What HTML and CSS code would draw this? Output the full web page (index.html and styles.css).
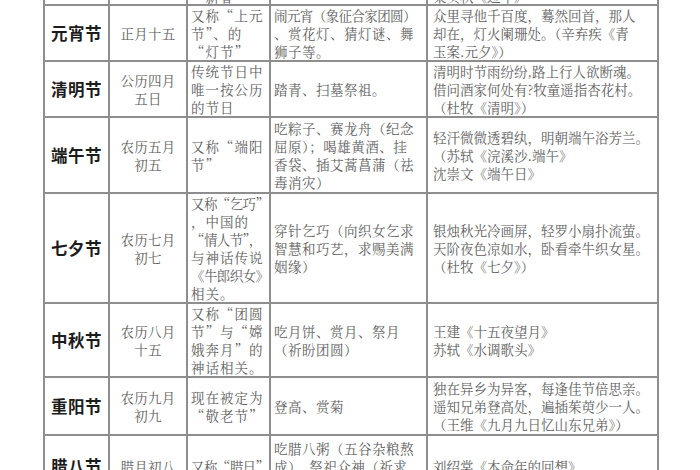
FILE: index.html
```html
<!DOCTYPE html>
<html lang="zh">
<head>
<meta charset="utf-8">
<title>中国传统节日</title>
<link rel="stylesheet" href="styles.css">
</head>
<body>
<div class="page">
<table class="fest">
  <colgroup>
    <col class="c1"><col class="c2"><col class="c3"><col class="c4"><col class="c5">
  </colgroup>
  <tbody>
    <tr class="r0">
      <td class="name"></td>
      <td class="date"></td>
      <td class="alias">“新春”</td>
      <td class="custom"></td>
      <td class="poem">梁实秋《过年》</td>
    </tr>
    <tr class="r1">
      <td class="name">元宵节</td>
      <td class="date">正月十五</td>
      <td class="alias">又称“上元<br>节”、的<br>“灯节”</td>
      <td class="custom"><span class="tight">闹元宵（象征合家团圆）</span><br>、赏花灯、猜灯谜、舞<br>狮子等。</td>
      <td class="poem">众里寻他千百度，蓦然回首，那人<br>却在，灯火阑珊处。（辛弃疾《青<br>玉案.元夕》）</td>
    </tr>
    <tr class="r2">
      <td class="name">清明节</td>
      <td class="date">公历四月<br>五日</td>
      <td class="alias">传统节日中<br>唯一按公历<br>的节日</td>
      <td class="custom">踏青、扫墓祭祖。</td>
      <td class="poem">清明时节雨纷纷,路上行人欲断魂。<br>借问酒家何处有?牧童遥指杏花村。<br>（杜牧《清明》）</td>
    </tr>
    <tr class="r3">
      <td class="name">端午节</td>
      <td class="date">农历五月<br>初五</td>
      <td class="alias">又称“端阳<br>节”</td>
      <td class="custom">吃粽子、赛龙舟（纪念<br>屈原）；喝雄黄酒、挂<br>香袋、插艾蒿菖蒲（祛<br>毒消灾）</td>
      <td class="poem">轻汗微微透碧纨，明朝端午浴芳兰。<br>（苏轼《浣溪沙.端午》<br>沈崇文《端午日》</td>
    </tr>
    <tr class="r4">
      <td class="name">七夕节</td>
      <td class="date">农历七月<br>初七</td>
      <td class="alias"><span class="tight">又称“乞巧”</span><br>，中国的<br><span class="tight">“情人节”，</span><br>与神话传说<br><span class="tight">《牛郎织女》</span><br>相关。</td>
      <td class="custom">穿针乞巧（向织女乞求<br>智慧和巧艺，求赐美满<br>姻缘）</td>
      <td class="poem">银烛秋光冷画屏，轻罗小扇扑流萤。<br>天阶夜色凉如水，卧看牵牛织女星。<br>（杜牧《七夕》）</td>
    </tr>
    <tr class="r5">
      <td class="name">中秋节</td>
      <td class="date">农历八月<br>十五</td>
      <td class="alias">又称“团圆<br>节”与“嫦<br>娥奔月”的<br>神话相关。</td>
      <td class="custom">吃月饼、赏月、祭月<br>（祈盼团圆）</td>
      <td class="poem">王建《十五夜望月》<br>苏轼《水调歌头》</td>
    </tr>
    <tr class="r6">
      <td class="name">重阳节</td>
      <td class="date">农历九月<br>初九</td>
      <td class="alias">现在被定为<br>“敬老节”</td>
      <td class="custom">登高、赏菊</td>
      <td class="poem">独在异乡为异客，每逢佳节倍思亲。<br>遥知兄弟登高处，遍插茱萸少一人。<br>（王维《九月九日忆山东兄弟》）</td>
    </tr>
    <tr class="r7">
      <td class="name">腊八节</td>
      <td class="date">腊月初八</td>
      <td class="alias"><span class="tight">又称“腊日”</span></td>
      <td class="custom">吃腊八粥（五谷杂粮熬<br>成）、祭祀众神（祈求<br>丰收吉祥）</td>
      <td class="poem">刘绍棠《本命年的回想》</td>
    </tr>
  </tbody>
</table>
</div>
</body>
</html>
```
FILE: styles.css
```css
html, body {
  margin: 0;
  padding: 0;
  background: #ffffff;
}

.page {
  width: 700px;
  height: 470px;
  overflow: hidden;
  padding-left: 43px;
  box-sizing: border-box;
}

.fest {
  border-collapse: collapse;
  table-layout: fixed;
  width: 614px;
  margin-top: -16px;
  font-family: "Noto Serif CJK SC", "Noto Sans CJK SC", serif;
  font-size: 13.5px;
  line-height: 18px;
  color: #606060;
}

.c1 { width: 65px; }
.c2 { width: 78px; }
.c3 { width: 83px; }
.c4 { width: 157px; }
.c5 { width: 231px; }

.fest td {
  border: 2px solid #8e8e8e;
  padding: 0 3px;
  vertical-align: middle;
  white-space: nowrap;
  overflow: visible;
}

.fest td.name {
  text-align: center;
  font-family: "Noto Sans CJK SC", sans-serif;
  font-weight: 700;
  font-size: 16.5px;
  color: #1c1c1c;
  letter-spacing: 0.5px;
  padding: 0;
}

.fest td.date {
  text-align: center;
  padding: 0;
  letter-spacing: 0.3px;
}

.fest td.alias {
  padding-left: 3px;
  padding-right: 0;
  letter-spacing: 1px;
}

.fest td.custom {
  padding-left: 3px;
  letter-spacing: 0.5px;
}

.fest td.poem {
  padding-left: 5px;
}

.tight {
  letter-spacing: -0.6px;
}

.r0 td {
  height: 20px;
  vertical-align: bottom;
  border-top: none;
  line-height: 16px;
}
.r1 td { height: 54px; }
.r2 td { height: 54px; }
.r3 td { height: 74px; }
.r4 td { height: 107px; }
.r5 td { height: 71px; }
.r6 td { height: 56px; }
.r7 td { height: 60px; }
```
